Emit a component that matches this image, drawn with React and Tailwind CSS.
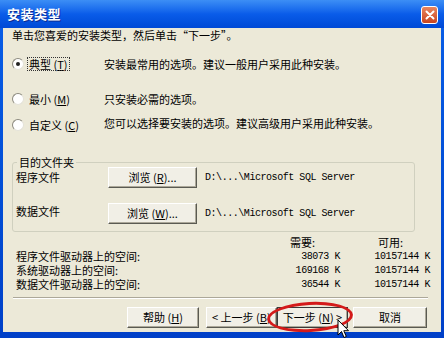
import React from 'react';

const cjk = { fontFamily: '"Noto Sans CJK SC", "Noto Sans", sans-serif' };
const mono = { fontFamily: '"Liberation Mono", "DejaVu Sans Mono", monospace' };

function Radio({ checked }) {
  return (
    <span className="w-[12px] h-[12px] rounded-full bg-white border border-t-[#8c8a7e] border-l-[#8c8a7e] border-r-[#e4e2d8] border-b-[#e4e2d8] flex items-center justify-center shrink-0">
      {checked && <span className="w-[4px] h-[4px] rounded-full bg-[#222]" />}
    </span>
  );
}

function Btn({ children, className = '', strong }) {
  return (
    <div
      className={`h-[21px] flex items-center overflow-hidden whitespace-nowrap text-[11px] text-black bg-[#F1EFE6] border ${
        strong
          ? 'border-[#3a3a3a]'
          : 'border-t-white border-l-white border-r-[#5a5a52] border-b-[#5a5a52]'
      } shadow-[inset_-1px_-1px_0_#aca899] ${className}`}
    >
      {children}
    </div>
  );
}

export default function App() {
  const options = [
    { label: '典型', key: 'T', desc: '安装最常用的选项。建议一般用户采用此种安装。', checked: true, mt: 'mt-[14px]' },
    { label: '最小', key: 'M', desc: '只安装必需的选项。', mt: 'mt-[19px]' },
    { label: '自定义', key: 'C', desc: '您可以选择要安装的选项。建议高级用户采用此种安装。', mt: 'mt-[10px]' },
  ];

  const space = [
    ['程序文件驱动器上的空间:', '38073 K', '10157144 K'],
    ['系统驱动器上的空间:', '169168 K', '10157144 K'],
    ['数据文件驱动器上的空间:', '36544 K', '10157144 K'],
  ];

  return (
    <div className="relative w-[444px] h-[338px] overflow-hidden bg-gradient-to-b from-[#0A5FE8] to-[#0040C8] select-none" style={cjk}>
      {/* 标题栏 */}
      <div className="h-[28px] flex items-center justify-between pl-[7px] pr-[6px] bg-gradient-to-b from-[#3C8EF5] via-[#0A5CE9] to-[#0049D6]">
        <span className="text-white text-[13px] font-bold tracking-[0.5px] [text-shadow:1px_1px_0_#0a2a90]">安装类型</span>
        <div className="w-[17px] h-[18px] mt-[1px] rounded-[3px] border border-white bg-gradient-to-b from-[#E8855E] to-[#C9431C] flex items-center justify-center">
          <svg width="10" height="10" viewBox="0 0 10 10">
            <path d="M1.5 1.5 L8.5 8.5 M8.5 1.5 L1.5 8.5" stroke="white" strokeWidth="2" strokeLinecap="round" />
          </svg>
        </div>
      </div>

      {/* 内容 */}
      <div className="mx-[3px] h-[304px] bg-[#ECE9D8] flex flex-col text-[11px] text-black">
        <div className="h-[14px] leading-[14px] pl-[9px]">单击您喜爱的安装类型，然后单击“下一步”。</div>

        {options.map((o) => (
          <div key={o.key} className={`${o.mt} h-[16px] flex items-center pl-[9px]`}>
            <div className="w-[92px] flex items-center gap-[4px]">
              <Radio checked={o.checked} />
              <span className={`leading-[12px] px-[1px] ${o.checked ? 'outline outline-1 outline-dotted outline-[#333]' : ''}`}>
                {o.label} (<span className="underline">{o.key}</span>)
              </span>
            </div>
            <span className={o.key === 'C' ? '-mt-[4px]' : ''}>{o.desc}</span>
          </div>
        ))}

        <fieldset className="mt-[23px] ml-[9px] w-[403px] border border-[#D0D0BF] rounded-[3px] pb-[8px]">
          <legend className="ml-[4px] px-[2px] leading-[12px]">目的文件夹</legend>
          <div className="-mt-[1px] h-[20px] flex items-center pl-[3px]">
            <span className="w-[92px]">程序文件</span>
            <Btn className="w-[89px] justify-center">浏览 (<span className="underline">R</span>)...</Btn>
            <span className="ml-[8px] text-[10px] tracking-[-0.45px]" style={mono}>D:\...\Microsoft SQL Server</span>
          </div>
          <div className="mt-[16px] h-[20px] flex items-center pl-[3px]">
            <span className="w-[92px] -mt-[4px]">数据文件</span>
            <Btn className="w-[89px] justify-center">浏览 (<span className="underline">W</span>)...</Btn>
            <span className="ml-[8px] text-[10px] tracking-[-0.45px]" style={mono}>D:\...\Microsoft SQL Server</span>
          </div>
        </fieldset>

        <div className="mt-[3px] pl-[13px] leading-[13px]">
          <div className="flex h-[14px] items-center">
            <span className="w-[254px]" />
            <span className="w-[70px] pl-[20px]">需要:</span>
            <span className="w-[90px] pl-[38px]">可用:</span>
          </div>
          {space.map(([l, n, a]) => (
            <div key={l} className="flex h-[14px] items-center">
              <span className="w-[254px]">{l}</span>
              <span className="w-[70px] text-right text-[10px] tracking-[-0.45px]" style={mono}>{n}</span>
              <span className="w-[90px] text-right text-[10px] tracking-[-0.45px]" style={mono}>{a}</span>
            </div>
          ))}
        </div>

        <div className="mt-[6px] ml-[10px] w-[415px] border-t border-t-[#ACA899] border-b border-b-white" />

        <div className="mt-[8px] flex pl-[124px]">
          <Btn className="w-[72px] justify-center">帮助 (<span className="underline">H</span>)</Btn>
          <Btn className="w-[71px] ml-[7px] pl-[5px]">&lt;&nbsp;上一步 (<span className="underline">B</span>)</Btn>
          <Btn className="w-[71px] justify-center" strong>下一步 (<span className="underline">N</span>) &gt;</Btn>
          <Btn className="w-[74px] ml-[5px] justify-center">取消</Btn>
        </div>
      </div>

      {/* 红色圈注 */}
      <div className="absolute left-[267px] top-[302px] w-[86px] h-[30px] rounded-[50%] border-[3px] border-[#D41A1A] -rotate-[3deg]" />

      {/* 鼠标指针 */}
      <svg className="absolute left-[337px] top-[319px]" width="13" height="20" viewBox="0 0 13 20">
        <path d="M1 1 L1 16 L4.5 12.5 L7 18.5 L9.3 17.5 L6.8 11.7 L11.5 11.7 Z" fill="white" stroke="black" strokeWidth="1" strokeLinejoin="round" />
      </svg>
    </div>
  );
}
